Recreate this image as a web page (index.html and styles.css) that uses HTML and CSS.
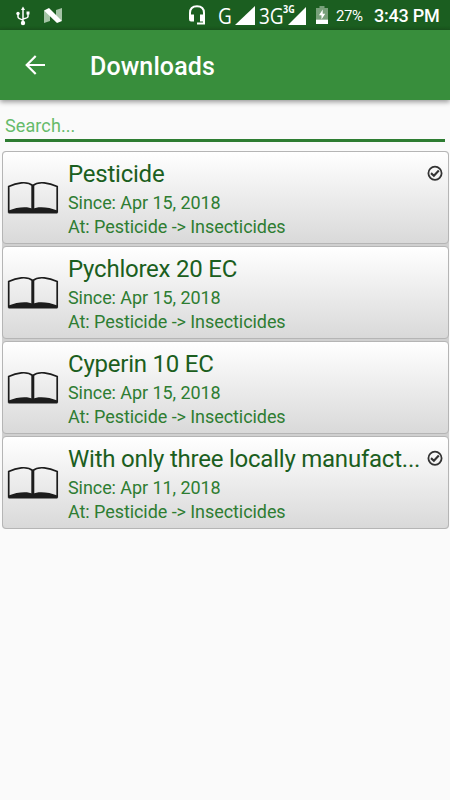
FILE: index.html
```html
<!DOCTYPE html>
<html lang="en">
<head>
<meta charset="utf-8">
<title>Downloads</title>
<link rel="stylesheet" href="styles.css">
</head>
<body>
<svg width="0" height="0" class="defs">
  <symbol id="book" viewBox="0 0 52 36">
    <path d="M1.700 6.500C9 3 20 .7 25.800 5.500C31.500 .7 42.500 3 50.200 6.500V32H1.700Z" fill="none" stroke="#1c1c1c" stroke-width="1.700"/>
    <path d="M25.800 5.500V31.500" stroke="#1c1c1c" stroke-width="3"/>
    <path d="M1.500 30.500C10 27 21 26 25.800 29C30.500 26 42 27 50.400 30.500V33.400H1.500Z" fill="#1c1c1c"/>
  </symbol>
  <symbol id="check" viewBox="0 0 16 16">
    <circle cx="8" cy="8.300" r="6.600" fill="none" stroke="#333" stroke-width="1.800"/>
    <path d="M4 8.100L6.900 10.700L11.800 5.500" fill="none" stroke="#333" stroke-width="2.100"/>
  </symbol>
</svg>
<div class="status">
  <svg class="usb" width="14" height="20" viewBox="0 0 14 20" fill="none" stroke="#fff" stroke-width="1.500"><path d="M7 3V17M2 8V11Q2 12.500 7 14M12 7V10.500Q12 12 7 13"/><path d="M7 .5L9 4H5Z" fill="#fff" stroke="none"/><circle cx="7" cy="17" r="2.200" fill="#fff" stroke="none"/><circle cx="2" cy="7.500" r="1.700" fill="#fff" stroke="none"/><path d="M10.500 5.500h3v3h-3z" fill="#fff" stroke="none"/></svg>
  <svg class="nougat" width="18" height="15" viewBox="0 0 18 15"><path d="M0 2.500L6 6V13L0 15ZM12 2L18 0V13L12 10Z" fill="#a5c4a6"/><path d="M0 2.500L5 0L18 13L13 15Z" fill="#fff"/></svg>
  <svg class="headset" width="16" height="20" viewBox="0 0 16 20"><path d="M1 12V8Q1 1.200 8 1.200T15 8V18.500H8" fill="none" stroke="#fff" stroke-width="2"/><path d="M0 9.500H5V16.500H2Q0 16.500 0 14ZM11 9.500H16V16.500H11Z" fill="#fff"/></svg>
  <span class="net g">G</span>
  <svg class="sig" width="20" height="19" viewBox="0 0 20 19"><path d="M20 0V19H0Z" fill="#fff"/></svg>
  <span class="net three">3G</span>
  <div class="sigbox"><span>3G</span><svg width="18" height="18" viewBox="0 0 18 18"><path d="M18 0V18H0Z" fill="#fff"/></svg></div>
  <svg class="battery" width="12" height="18" viewBox="0 0 12 18"><path d="M0 2H3.500V0H8.500V2H12V13.500H0Z" fill="#78a07a"/><path d="M0 13.500H12V18H0Z" fill="#fff"/><path d="M6.700 3.500L3 9.300H5.500V13.500L9.200 7.800H6.700Z" fill="#fff"/></svg>
  <span class="pct">27%</span>
  <span class="time">3:43 PM</span>
</div>
<header class="bar">
  <svg width="20" height="20" viewBox="0 0 20 20" fill="none" stroke="#fff" stroke-width="2.200"><path d="M20 10H2M10.700 1L1.700 10L10.700 19"/></svg>
  <h1>Downloads</h1>
</header>
<div class="search"><span>Search...</span></div>
<main class="list">
  <article class="card">
    <svg class="book"><use href="#book"/></svg>
    <div class="info"><h2>Pesticide</h2><p>Since: Apr 15, 2018</p><p>At: Pesticide -&gt; Insecticides</p></div>
    <svg class="check"><use href="#check"/></svg>
  </article>
  <article class="card">
    <svg class="book"><use href="#book"/></svg>
    <div class="info"><h2>Pychlorex 20 EC</h2><p>Since: Apr 15, 2018</p><p>At: Pesticide -&gt; Insecticides</p></div>
  </article>
  <article class="card">
    <svg class="book"><use href="#book"/></svg>
    <div class="info"><h2>Cyperin 10 EC</h2><p>Since: Apr 15, 2018</p><p>At: Pesticide -&gt; Insecticides</p></div>
  </article>
  <article class="card">
    <svg class="book"><use href="#book"/></svg>
    <div class="info"><h2>With only three locally manufact...</h2><p>Since: Apr 11, 2018</p><p>At: Pesticide -&gt; Insecticides</p></div>
    <svg class="check"><use href="#check"/></svg>
  </article>
</main>
</body>
</html>
```
FILE: styles.css
```css
* { box-sizing: border-box; margin: 0; padding: 0; }
body {
  height: 800px;
  background: #fafafa;
  font-family: Roboto, "Liberation Sans", sans-serif;
  overflow: hidden;
}
svg { display: block; flex: none; }
.defs { position: absolute; }
.status {
  display: flex;
  align-items: flex-start;
  height: 30px;
  background: linear-gradient(#1b5e20 26px, #1a561e);
  color: #fff;
  white-space: nowrap;
}
.usb { margin: 6px 0 0 16px; }
.nougat { margin: 8px 0 0 14px; }
.headset { margin: 5px 0 0 127px; }
.net { font-family: "Open Sans", sans-serif; font-size: 22px; line-height: 30px; transform-origin: left; }
.g { width: 17px; margin-left: 13px; transform: scaleX(.86); }
.sig { margin-top: 6px; }
.three { width: 23px; margin-left: 4px; transform: scaleX(.86); }
.sigbox { position: relative; margin: 7px 0 0 6px; }
.sigbox span {
  position: absolute;
  left: -5px;
  top: -4px;
  font: 700 10px/12px "Open Sans", sans-serif;
  transform: scaleX(.9);
  transform-origin: left;
}
.battery { margin: 6px 0 0 10px; }
.pct { width: 38px; margin-left: 8px; font-size: 15px; line-height: 32px; letter-spacing: -0.4px; }
.time { font-size: 18px; font-weight: 500; line-height: 32px; letter-spacing: -0.25px; }
.bar {
  display: flex;
  align-items: center;
  height: 70px;
  padding-left: 25px;
  background: #388e3c;
  color: #fff;
  box-shadow: 0 2px 5px rgba(0, 0, 0, .4);
}
.bar h1 { margin: 3px 0 0 45px; font-size: 25px; font-weight: 500; line-height: 30px; letter-spacing: .1px; }
.search {
  height: 42px;
  margin: 0 5px;
  padding-top: 15px;
  border-bottom: 3px solid #2e7d32;
  color: #66bb6a;
  font-size: 18px;
  line-height: 22px;
  letter-spacing: .1px;
}
.list {
  display: flex;
  flex-direction: column;
  gap: 2px;
  margin: 9px 1.500px 0;
  background: #d0d0d0;
  border-radius: 4px;
}
.card {
  display: flex;
  height: 93px;
  padding-left: 4.500px;
  border: 1px solid #b5b5b5;
  border-radius: 4px;
  background: linear-gradient(#fff, #d9d9d9);
}
.book { width: 52px; height: 36px; margin-top: 28px; }
.info { width: 359px; margin: 6px 0 0 9px; white-space: nowrap; }
.info h2 { margin-bottom: .5px; color: #1b5e20; font-size: 24px; font-weight: 400; line-height: 32px; letter-spacing: -0.230px; }
.info p { color: #2e7d32; font-size: 18px; line-height: 24px; letter-spacing: -0.070px; }
.check { width: 16px; height: 16px; margin-top: 13px; }
```
